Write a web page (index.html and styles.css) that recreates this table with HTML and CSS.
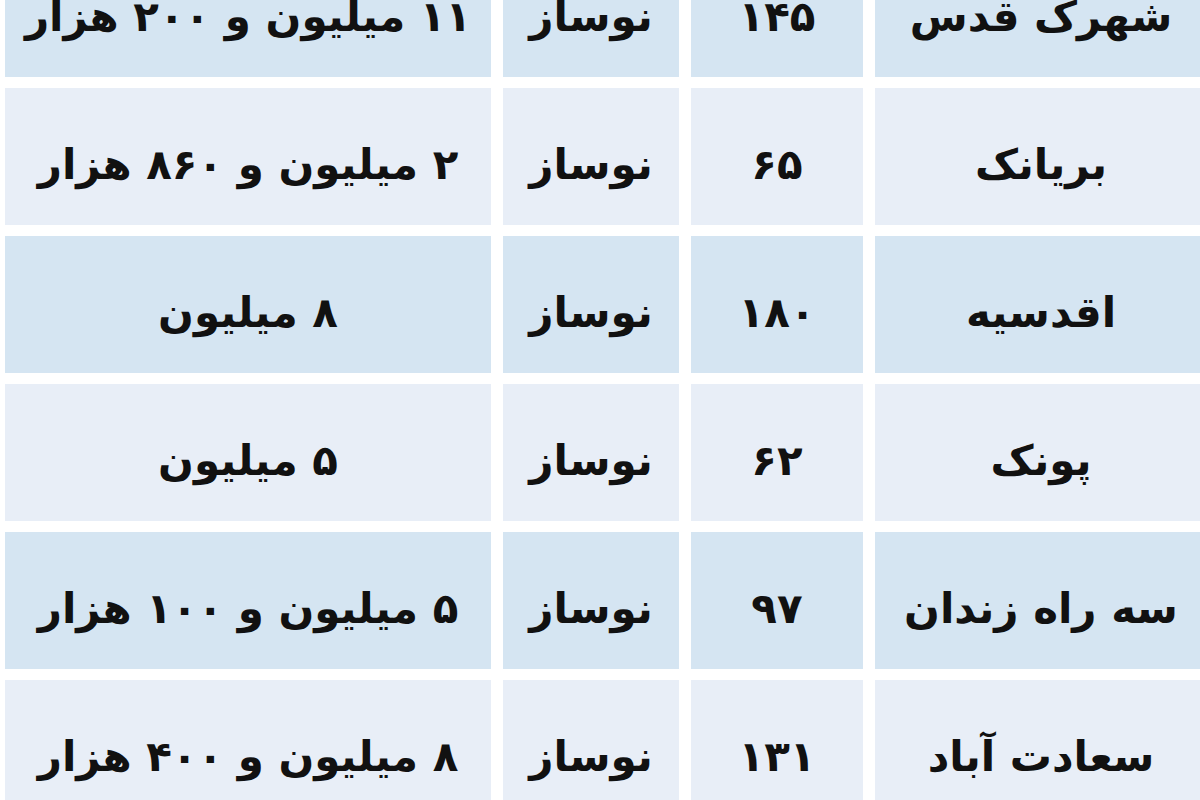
FILE: index.html
```html
<!DOCTYPE html>
<html lang="fa" dir="rtl">
<head>
<meta charset="utf-8">
<title>قیمت مسکن</title>
<link rel="stylesheet" href="styles.css">
</head>
<body>
<div class="table">
  <div class="cell blue">شهرک قدس</div>
  <div class="cell blue">۱۴۵</div>
  <div class="cell blue">نوساز</div>
  <div class="cell blue">۱۱ میلیون و ۲۰۰ هزار</div>

  <div class="cell light">بریانک</div>
  <div class="cell light">۶۵</div>
  <div class="cell light">نوساز</div>
  <div class="cell light">۲ میلیون و ۸۶۰ هزار</div>

  <div class="cell blue">اقدسیه</div>
  <div class="cell blue">۱۸۰</div>
  <div class="cell blue">نوساز</div>
  <div class="cell blue">۸ میلیون</div>

  <div class="cell light">پونک</div>
  <div class="cell light">۶۲</div>
  <div class="cell light">نوساز</div>
  <div class="cell light">۵ میلیون</div>

  <div class="cell blue">سه راه زندان</div>
  <div class="cell blue">۹۷</div>
  <div class="cell blue">نوساز</div>
  <div class="cell blue">۵ میلیون و ۱۰۰ هزار</div>

  <div class="cell light">سعادت آباد</div>
  <div class="cell light">۱۳۱</div>
  <div class="cell light">نوساز</div>
  <div class="cell light">۸ میلیون و ۴۰۰ هزار</div>
</div>
</body>
</html>
```

FILE: styles.css
```css
html, body {
  margin: 0;
  padding: 0;
  background: #ffffff;
  overflow: hidden;
  width: 1200px;
  height: 800px;
}

body {
  font-family: "DejaVu Sans", sans-serif;
  font-weight: bold;
  color: #111111;
}

.table {
  direction: rtl;
  display: grid;
  grid-template-columns: 332px 172px 176px 486px;
  grid-auto-rows: 137px;
  column-gap: 12px;
  row-gap: 11px;
  width: 1202px;
  margin-top: -60px;
  margin-right: -7px;
  margin-left: 5px;
}

.cell {
  display: flex;
  align-items: center;
  justify-content: center;
  font-size: 42px;
  white-space: nowrap;
  padding-top: 16px;
  box-sizing: border-box;
}

.blue {
  background: #d5e5f2;
}

.light {
  background: #e8eef7;
}
```
